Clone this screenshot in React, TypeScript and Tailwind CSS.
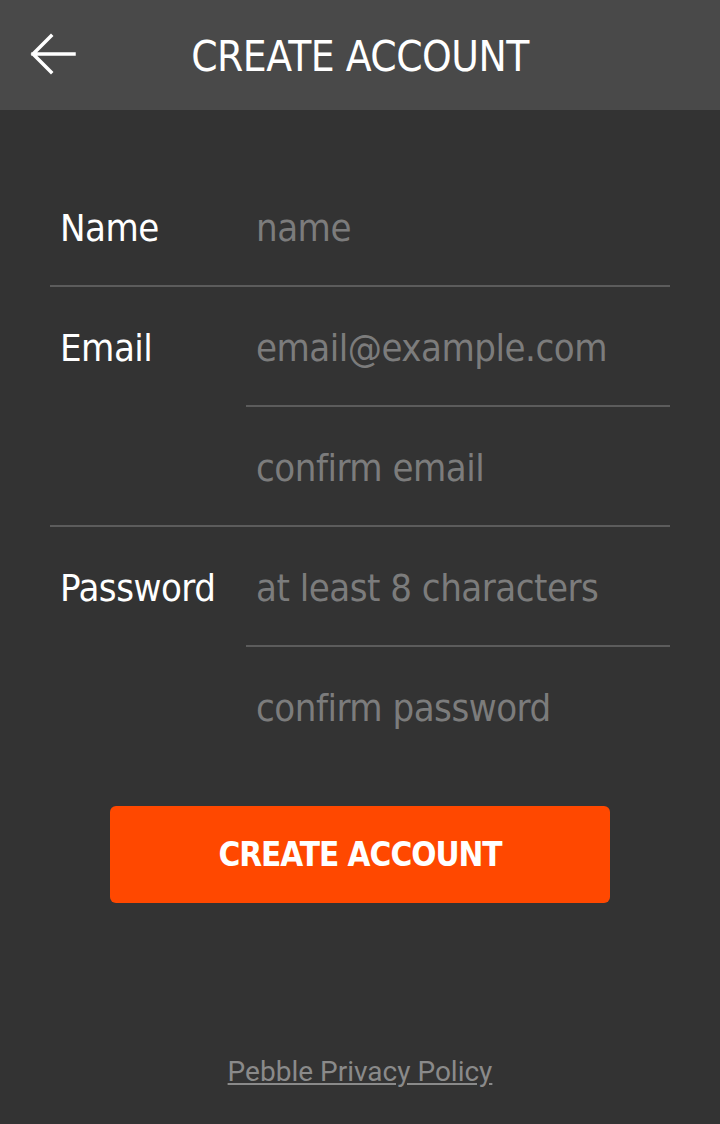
import React from "react";

const din = { fontFamily: '"DejaVu Sans Condensed", "DejaVu Sans", sans-serif' };

function Row({ label, placeholder, border }: { label?: string; placeholder: string; border: "full" | "part" | "none" }) {
  return (
    <div className="flex h-[120px] relative">
      <div className="w-[196px] shrink-0 pl-[10px] pt-[2px] flex items-center text-white text-[38px] tracking-[-0.5px]" style={din}>
        {label}
      </div>
      <input
        className="flex-1 min-w-0 w-0 bg-transparent outline-none pl-[10px] pt-[2px] text-[38px] tracking-[-0.5px] text-white placeholder:text-[#7c7c7c]"
        style={din}
        placeholder={placeholder}
      />
      {border === "full" && <div className="absolute left-0 right-0 bottom-0 h-[2px] bg-[#5c5c5c]" />}
      {border === "part" && <div className="absolute left-[196px] right-0 bottom-0 h-[2px] bg-[#5c5c5c]" />}
    </div>
  );
}

export default function App() {
  return (
    <div className="w-[720px] h-[1124px] bg-[#333333] flex flex-col">
      <div className="h-[110px] bg-[#494949] relative flex items-center justify-center">
        <svg className="absolute left-[28px] top-[32px]" width="50" height="44" viewBox="0 0 50 44">
          <path d="M23 4 L5 22 L23 40 M5 22 L46 22" stroke="white" strokeWidth="3.5" fill="none" strokeLinecap="square" />
        </svg>
        <span className="text-white text-[42px] tracking-[-0.5px] pt-[2px]" style={din}>CREATE ACCOUNT</span>
      </div>
      <div className="mx-[50px] mt-[57px]">
        <Row label="Name" placeholder="name" border="full" />
        <Row label="Email" placeholder="email@example.com" border="part" />
        <Row placeholder="confirm email" border="full" />
        <Row label="Password" placeholder="at least 8 characters" border="part" />
        <Row placeholder="confirm password" border="none" />
      </div>
      <div className="flex justify-center mt-[39px]">
        <button
          className="w-[500px] h-[97px] rounded-[6px] bg-[#ff4800] text-white text-[33px] font-bold tracking-[-1px]"
          style={din}
        >
          CREATE ACCOUNT
        </button>
      </div>
      <div className="flex-1" />
      <div className="flex justify-center pb-[31px]">
        <a className="text-[28px] text-[#8a8a8a] underline" style={{ fontFamily: "Roboto, sans-serif" }}>
          Pebble Privacy Policy
        </a>
      </div>
    </div>
  );
}
